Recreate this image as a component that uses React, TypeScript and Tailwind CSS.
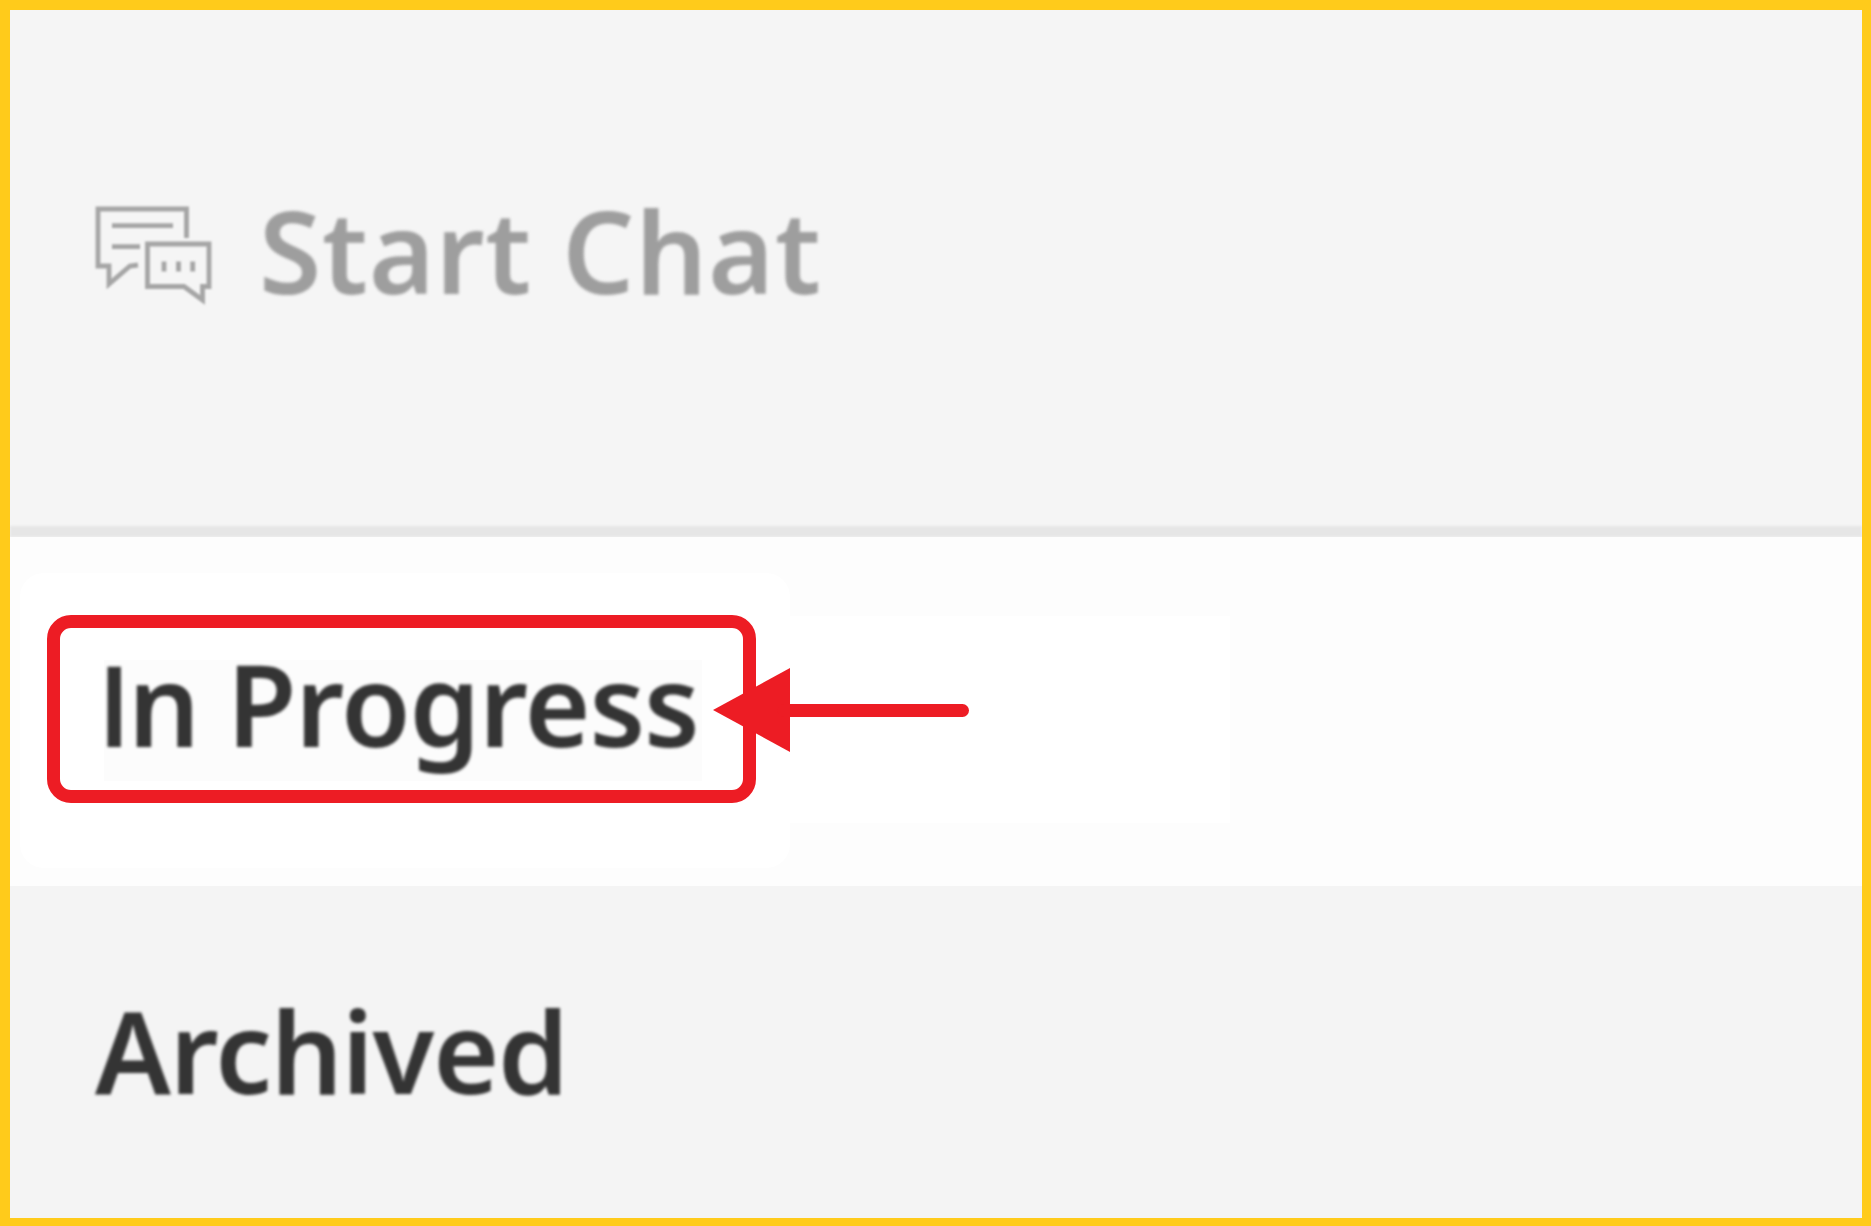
function ChatIcon() {
  return (
    <svg
      width="122"
      height="104"
      viewBox="92 203 122 104"
      fill="none"
      stroke="#a5a5a5"
      strokeWidth="4.8"
      className="shrink-0 blur-[1.2px]"
    >
      <path d="M186.5 238V209H98V266H109V284L130 266L138 265" />
      <path d="M112 225.7H173M112 246.7H140" />
      <path d="M147.5 244H209V286.5H202.5V300L184 286.5H147.5Z" />
      <path d="M164 261.5V271.5M178.5 261.5V271.5M192.7 261.5V271.5" />
    </svg>
  )
}

function Arrow() {
  return (
    <svg width="264" height="86" viewBox="0 0 264 86" className="absolute top-[130px] left-[702px]">
      <path d="M1 43L78 1V85Z" fill="#ed1c24" />
      <path d="M72 43.5H250.5" stroke="#ed1c24" strokeWidth="13" strokeLinecap="round" />
    </svg>
  )
}

export default function App() {
  return (
    <div className="flex h-[1226px] w-[1871px] flex-col overflow-hidden border-t-10 border-r-9 border-b-8 border-l-10 border-[#ffcb1b] bg-[#f5f5f5] font-['Noto_Sans',sans-serif] text-[113px] leading-[121px] font-semibold whitespace-nowrap">
      <div className="flex h-[516px] shrink-0 items-start pt-[193px] pl-[82px] text-[#9e9e9e]">
        <ChatIcon />
        <div className="-mt-[13px] ml-[45px] tracking-[0.8px] blur-[1.4px]">Start Chat</div>
      </div>
      <div className="h-[11px] shrink-0 bg-[#e6e6e6] blur-[1px]" />

      <div className="relative h-[349px] shrink-0 bg-[#fdfdfd]">
        <div className="flex h-full items-start pt-[36px]">
          <div className="ml-[10px] flex h-[295px] w-[770px] items-start rounded-[24px] bg-white pt-[42px] pl-[27px]">
            <div className="h-[188px] w-[709px] rounded-[24px] border-13 border-[#ed1c24] pt-[32px] pl-[44px]">
              <div className="flex h-[121px] w-[598px] items-start bg-[#fcfcfc] text-[#343434]">
                <div className="-mt-[17px] -ml-[7px] flex tracking-[-1.2px] blur-[1.4px]">
                  <span className="w-[31px] shrink-0 font-['Open_Sans',sans-serif]">I</span>
                  <span>n Progress</span>
                </div>
              </div>
            </div>
          </div>
          <div className="mt-[43px] h-[207px] w-[440px] bg-white" />
        </div>
        <Arrow />
      </div>

      <div className="flex-1 bg-[#f4f4f4] pt-[104px] pl-[85px] tracking-[-1.2px] text-[#343434]">
        <div className="blur-[1.4px]">Archived</div>
      </div>
    </div>
  )
}
